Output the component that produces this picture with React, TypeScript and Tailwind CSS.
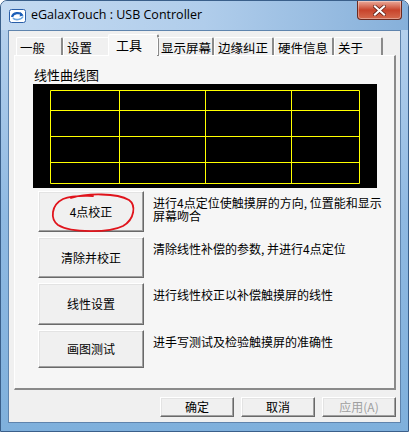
const CJK = '"Noto Sans CJK SC", "Liberation Sans", sans-serif';

const tabs = [
  { label: "一般", w: "w-[47px]" },
  { label: "设置", w: "w-[47px]" },
  { label: "工具", w: "w-[51px]", active: true },
  { label: "显示屏幕", w: "w-[57px]" },
  { label: "边缘纠正", w: "w-[60px]" },
  { label: "硬件信息", w: "w-[60px]" },
  { label: "关于", w: "w-[49px]" },
];

const rows = [
  { label: "4点校正", h: "h-[41px]", lines: ["进行4点定位使触摸屏的方向, 位置能和显示", "屏幕吻合"], circled: true },
  { label: "清除并校正", h: "h-[41px]", lines: ["清除线性补偿的参数, 并进行4点定位"] },
  { label: "线性设置", h: "h-[42px]", lines: ["进行线性校正以补偿触摸屏的线性"] },
  { label: "画图测试", h: "h-[38px]", lines: ["进手写测试及检验触摸屏的准确性"] },
];

function AppIcon() {
  return (
    <svg width="17" height="14" viewBox="0 0 17 14">
      <rect x="0.5" y="0.5" width="16" height="13" rx="2" fill="#ffffff" stroke="#2a5ea8" />
      <path d="M3 8 C4 3.5, 11 3, 13 6" fill="none" stroke="#1d5fb8" strokeWidth="2.2" />
      <path d="M11.5 3.2 L14.6 6.6 L10.6 7.4 Z" fill="#1d5fb8" />
      <path d="M14 7.5 C12.5 11, 6 11.5, 4 9" fill="none" stroke="#6fa8e0" strokeWidth="1.6" />
    </svg>
  );
}

function CloseButton() {
  return (
    <div className="w-[45px] h-[19px] rounded-b-[4px] border border-t-0 border-[#6b2a20] bg-gradient-to-b from-[#e9a99a] via-[#c8432b] to-[#d56a4e] flex items-center justify-center shadow-[inset_0_0_0_1px_rgba(255,255,255,0.35)]">
      <svg width="13" height="11" viewBox="0 0 13 11">
        <path d="M2 1.5 L11 9.5 M11 1.5 L2 9.5" stroke="#5a1a12" strokeWidth="3.6" strokeLinecap="square" />
        <path d="M2 1.5 L11 9.5 M11 1.5 L2 9.5" stroke="#ffffff" strokeWidth="2.2" strokeLinecap="square" />
      </svg>
    </div>
  );
}

function Chart() {
  const xs = [17.5, 86.5, 172.5, 258.5, 326.5];
  const ys = [6.5, 26.5, 52.5, 78.5, 99.5];
  return (
    <svg width="344" height="104" className="ml-[18px] mt-[3px] block bg-black">
      {xs.map((x) => (
        <line key={"x" + x} x1={x} y1={6.5} x2={x} y2={99.5} stroke="#ffff00" strokeWidth="1" />
      ))}
      {ys.map((y) => (
        <line key={"y" + y} x1={17.5} y1={y} x2={326.5} y2={y} stroke="#ffff00" strokeWidth="1" />
      ))}
    </svg>
  );
}

function RedCircle() {
  return (
    <svg width="88" height="42" viewBox="0 0 88 42" className="absolute left-[10px] top-[0px] pointer-events-none">
      <path
        d="M22 6 C38 1, 68 1, 80 8 C87 13, 86 27, 74 34 C60 41, 22 41, 9 33 C1 27, 2 13, 14 7 C24 3, 34 4, 44 4"
        fill="none"
        stroke="#e0141c"
        strokeWidth="1.8"
        strokeLinecap="round"
      />
    </svg>
  );
}

function ClassicButton({ children, className = "", disabled = false }: { children: React.ReactNode; className?: string; disabled?: boolean }) {
  return (
    <div
      className={
        "relative flex items-center justify-center border border-t-white border-l-white border-r-[#696969] border-b-[#696969] bg-[#f0f0f0] shadow-[inset_-1px_-1px_0_#a0a0a0,inset_1px_1px_0_#e3e3e3] text-[12px] leading-[12px] " +
        (disabled ? "text-[#a0a0a0] " : "text-black ") +
        className
      }
    >
      {children}
    </div>
  );
}

export default function App() {
  return (
    <div
      className="w-[409px] h-[432px] flex flex-col overflow-hidden rounded-t-[7px] border border-[#3a5f8a] bg-gradient-to-b from-[#b9d3ee] via-[#8fb9e2] to-[#7fb0dc]"
      style={{ fontFamily: CJK }}
    >
      <div className="h-[29px] flex items-start shrink-0 bg-gradient-to-r from-[#c4daf1] via-[#b0cdeb] to-[#86b0da]">
        <div className="ml-[8px] mt-[8px]">
          <AppIcon />
        </div>
        <div
          className="ml-[5px] mt-[6px] text-[12.5px] leading-[16px] text-black"
          style={{ fontFamily: '"Open Sans", "Liberation Sans", sans-serif' }}
        >
          eGalaxTouch : USB Controller
        </div>
        <div className="ml-auto mr-[6px]">
          <CloseButton />
        </div>
      </div>

      <div className="mx-[7px] h-[393px] border border-[#5f84ad] bg-[#f0f0f0] flex flex-col">
        <div className="ml-[7px] mt-[3px] h-[22px] -mb-px flex items-end relative z-10">
          {tabs.map((t) =>
            t.active ? (
              <div
                key={t.label}
                className={t.w + " h-[22px] -mx-[2px] pl-[7px] pt-[2px] whitespace-nowrap bg-[#f6f6f6] border-l border-t border-l-white border-t-white border-r-2 border-r-[#8a8a8a] rounded-t-[2px] text-[13px] leading-[16px]"}
              >
                {t.label}
              </div>
            ) : (
              <div
                key={t.label}
                className={t.w + " h-[18px] mb-px pl-[3px] pt-[2px] whitespace-nowrap border-l border-t border-l-white border-t-white border-r-2 border-r-[#8a8a8a] rounded-t-[2px] text-[12.5px] leading-[16px] text-black"}
              >
                {t.label}
              </div>
            )
          )}
        </div>

        <div className="ml-[5px] w-[382px] h-[335px] bg-[#f6f6f6] border-l border-t border-l-white border-t-white border-r-2 border-b-2 border-r-[#8a8a8a] border-b-[#8a8a8a] flex flex-col">
          <div className="ml-[19px] mt-[12px] text-[13px] leading-[13px] text-black">线性曲线图</div>
          <Chart />
          <div className="ml-[23px] mt-[3px] flex flex-col gap-[5px]">
            {rows.map((r) => (
              <div key={r.label} className="flex items-start gap-[9px]">
                <ClassicButton className={"w-[106px] shrink-0 " + r.h}>
                  {r.label}
                  {r.circled && <RedCircle />}
                </ClassicButton>
                <div className="pt-[5px] text-[12px] leading-[13px] text-black whitespace-nowrap">
                  {r.lines.map((l) => (
                    <div key={l}>{l}</div>
                  ))}
                </div>
              </div>
            ))}
          </div>
        </div>

        <div className="mt-[7px] mr-[4px] flex justify-end gap-[7px]">
          <ClassicButton className="w-[74px] h-[20px]">确定</ClassicButton>
          <ClassicButton className="w-[74px] h-[20px]">取消</ClassicButton>
          <ClassicButton className="w-[74px] h-[20px]" disabled>
            应用(A)
          </ClassicButton>
        </div>
      </div>
    </div>
  );
}
